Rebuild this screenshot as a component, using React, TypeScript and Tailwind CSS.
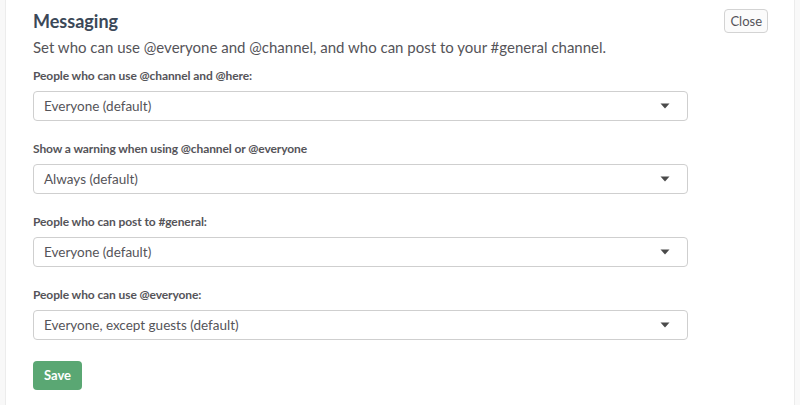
const fields = [
  { label: "People who can use @channel and @here:", value: "Everyone (default)" },
  { label: "Show a warning when using @channel or @everyone", value: "Always (default)" },
  { label: "People who can post to #general:", value: "Everyone (default)" },
  { label: "People who can use @everyone:", value: "Everyone, except guests (default)" },
];

function Caret() {
  return (
    <svg width="10" height="6" viewBox="0 0 10 6" className="text-[#4a4a4a]">
      <path d="M0.5 0.5 L9.5 0.5 L5 5.5 Z" fill="currentColor" />
    </svg>
  );
}

export default function App() {
  return (
    <div
      className="flex w-[800px] h-[405px] bg-white overflow-hidden"
      style={{ fontFamily: "Lato, 'Open Sans', sans-serif" }}
    >
      <div className="w-[6px] bg-[#f8f8f8] border-r border-[#ececec]" />
      <div className="flex-1 pl-[27px] pr-[26px] pt-[9px]">
        <div className="flex items-start justify-between">
          <div>
            <h2 className="text-[18px] leading-[22px] font-bold text-[#3b4858] mt-[1px]">Messaging</h2>
            <p className="text-[15px] leading-[20px] text-[#555459] mt-[5px]">
              Set who can use @everyone and @channel, and who can post to your #general channel.
            </p>
          </div>
          <button className="h-[24px] px-[5px] text-[13px] text-[#555459] bg-[#fbfbfb] border border-[#d3d3d3] rounded-[4px] leading-none">
            Close
          </button>
        </div>
        <div className="w-[655px] mt-[12px] flex flex-col gap-[21px]">
          {fields.map((f) => (
            <div key={f.label}>
              <label className="block text-[12px] leading-[14px] font-bold text-[#555459] mb-[8px] tracking-[-0.1px]">{f.label}</label>
              <div className="h-[30px] flex items-center justify-between pl-[10px] pr-[17px] border border-[#cfcfcf] rounded-[4px] bg-white">
                <span className="text-[13.5px] text-[#555459]">{f.value}</span>
                <Caret />
              </div>
            </div>
          ))}
        </div>
        <button className="mt-[21px] w-[49px] h-[29px] bg-[#5aa773] text-white text-[13px] font-bold rounded-[4px]">
          Save
        </button>
      </div>
      <div className="w-[6px] bg-[#f9f9f9] border-l border-[#ececec]" />
    </div>
  );
}
